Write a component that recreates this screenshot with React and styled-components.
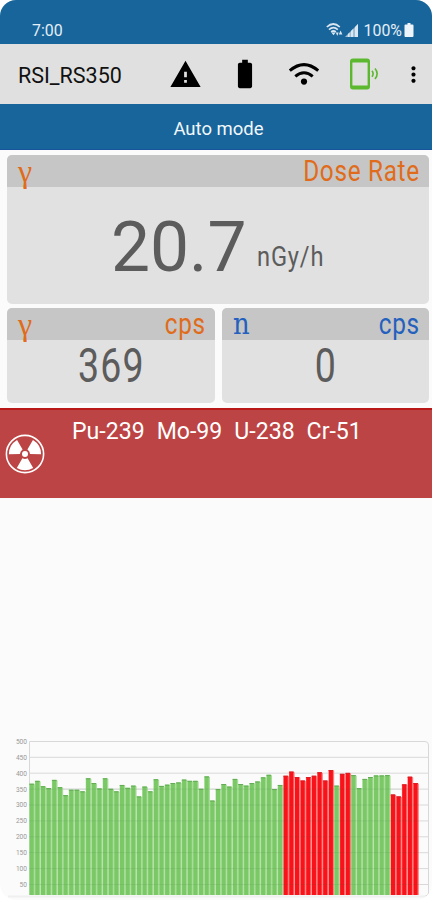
import styled, {createGlobalStyle} from 'styled-components';
import {MdWarning, MdBatteryFull, MdMoreVert} from 'react-icons/md'

const GlobalStyle = createGlobalStyle`
 body {
  margin: 0;
  background: #fff;
  font-family: Roboto, sans-serif;
 }
`;

const Screen = styled.div`
 width: 432px;
 height: 900px;
 overflow: hidden;
 display: flex;
 flex-direction: column;
 background: #fbfbfb;
 border-radius: 16px;
`;

const StatusBar = styled.div`
 box-sizing: border-box;
 height: 44px;
 padding: 16px 18px 0 32px;
 display: flex;
 align-items: center;
 background: #17659b;
 color: #e4eef6;
 font-size: 15.9px;
`;

const Clock = styled.span`
 flex: 1;
`;

const StatusIcons = styled.div`
 display: flex;
 align-items: center;
 gap: 2px;
`;

const Toolbar = styled.div`
 box-sizing: border-box;
 height: 60px;
 padding-left: 18px;
 display: flex;
 align-items: center;
 background: #e0e0e0;
 color: #000;
`;

const DeviceName = styled.span`
 width: 149px;
 padding-top: 3px;
 color: #111;
 font-size: 21.5px;
 white-space: nowrap;
`;

const ToolIcon = styled.div`
 width: ${(props) => props.$width}px;
 display: flex;
 justify-content: center;

 svg {
  flex: none;
 }
`;

const ModeBar = styled.div`
 box-sizing: border-box;
 height: 46px;
 padding: 4px 0 0 5px;
 display: flex;
 align-items: center;
 justify-content: center;
 background: #17659b;
 border-bottom: 1px solid #17549c;
 color: #f2f7fb;
 font-size: 18.5px;
`;

const Panels = styled.div`
 height: 258px;
 box-sizing: border-box;
 padding: 5px 3px 5px 7px;
 display: grid;
 grid-template-columns: 208px 207px;
 grid-template-rows: 149px 95px;
 gap: 4px 7px;
`;

const Panel = styled.div`
 grid-column: ${(props) => (props.$wide ? 'span 2' : 'auto')};
 display: flex;
 flex-direction: column;
 background: #e1e1e1;
 border-radius: 5px;
`;

const PanelHead = styled.div`
 height: 32px;
 box-sizing: border-box;
 padding: 0 10px 1px 11px;
 display: flex;
 align-items: center;
 justify-content: space-between;
 background: #c6c6c6;
 border-radius: 5px 5px 0 0;
 color: ${(props) => props.$color};
`;

const Symbol = styled.span`
 font-family: ${(props) => props.$font}, serif;
 font-size: ${(props) => props.$size}px;
 line-height: 30px;
 transform: scaleX(${(props) => props.$scale || 1});
 transform-origin: left;
`;

const Narrow = styled.span`
 display: inline-block;
 font-size: ${(props) => props.$size}px;
 letter-spacing: ${(props) => props.$spacing || 0}px;
 margin-right: -${(props) => props.$spacing || 0}px;
 transform: scaleX(${(props) => props.$scale});
 transform-origin: ${(props) => props.$origin || 'center'};
 white-space: nowrap;
`;

const Reading = styled.div`
 flex: 1;
 display: flex;
 justify-content: center;
 color: #5c5c5c;
 line-height: 52px;
`;

const DoseReading = styled.div`
 flex: 1;
 padding: 20px 0 0 104px;
 display: flex;
 align-items: flex-start;
 color: #5c5c5c;
`;

const DoseValue = styled.span`
 width: 146px;
 font-size: 69.5px;
 line-height: 82px;
`;

const DoseUnit = styled.div`
 padding-top: 33px;
 line-height: 34px;
`;

const Alarm = styled.div`
 height: 90px;
 box-sizing: border-box;
 padding: 0 5px;
 display: flex;
 background: #bd4444;
 border-top: 2px solid #b91818;
 color: #fff;
`;

const AlarmIcon = styled.div`
 width: 67px;
 padding-top: 24px;
`;

const Isotopes = styled.div`
 padding-top: 8px;
 display: flex;
 gap: 12px;
 font-size: 23.1px;
`;

const ChartArea = styled.div`
 margin-top: auto;
 height: 165px;

 svg {
  display: block;
 }
`;

const orange = '#e06c1b';
const blue = '#2460bd';

// counts per second, one bar for each sample
const samples = [
  367, 376, 359, 353, 379, 356, 331, 348, 348, 343, 384, 369, 352, 384, 351,
  343, 363, 354, 361, 327, 358, 343, 381, 360, 364, 369, 371, 380, 376, 376,
  351, 390, 314, 350, 366, 358, 382, 366, 361, 369, 374, 387, 395, 350, 363,
  392, 405, 388, 377, 388, 392, 403, 377, 410, 361, 398, 401, 394, 353, 382,
  388, 393, 393, 394, 333, 327, 365, 389, 369,
];

const isAlarm = (i) => (i >= 45 && i <= 53) || i === 55 || i === 56 || i >= 64;

const levels = [500, 450, 400, 350, 300, 250, 200, 150, 100, 50];

const toY = (value) => 6.4 + (500 - value) * 0.318;

function Wifi() {
  return (
    <svg width="32" height="24" viewBox="0 0 32 24" fill="none" stroke="#000" strokeWidth="3">
      <path d="M1.8 8.6Q16 -3.4 30.2 8.6" />
      <path d="M7.3 14.4Q16 7.2 24.7 14.4" />
      <circle cx="16" cy="19.6" r="3.1" fill="#000" stroke="none" />
    </svg>
  );
}

function PhoneLink() {
  return (
    <svg width="30" height="32" viewBox="0 0 30 32" fill="none" stroke="#5bb82f">
      <path fillRule="evenodd" fill="#5bb82f" stroke="none" d="M3 0.5H17Q20 0.5 20 3.5V28.5Q20 31.5 17 31.5H3Q0 31.5 0 28.5V3.5Q0 0.5 3 0.5ZM2.4 4.5V27.5H17.6V4.5Z" />
      <path strokeWidth="1.6" d="M22 12.8Q24.2 15.8 22 18.8M25 10.6Q29.3 15.8 25 21" />
    </svg>
  );
}

function StatusWifi() {
  return (
    <svg width="17" height="14" viewBox="0 0 17 14" fill="none" stroke="#d9e6f0" strokeWidth="1.7">
      <path d="M0.8 4Q7.3 -2 13.8 4M3 6.6Q7.5 2.6 11.8 6.6M5.2 9Q7.5 7 9.8 9" />
      <path fill="#d9e6f0" stroke="none" d="M5.3 9.5L7.5 12.2L9.6 9.5ZM9.8 9.5L11.3 13L12.6 9.5ZM12.8 11.4L14.6 7.6L16.4 11.4Z" />
    </svg>
  );
}

function Signal() {
  return (
    <svg width="13" height="13" viewBox="0 0 13 13">
      <path fill="#9dbfd8" d="M0 13L13 0V13Z" />
      <path fill="#dbe8f1" d="M3 13V10L4.5 8.5V13ZM6 13V7L8 5V13ZM10 13V3L13 0V13Z" />
    </svg>
  );
}

function Radiation() {
  return (
    <svg width="40" height="40" viewBox="-20 -20 40 40">
      <circle r="18.6" fill="none" stroke="#fff" strokeWidth="1.6" />
      {[0, 120, 240].map((angle) => (
        <path key={angle} transform={`rotate(${angle})`} fill="#fff" d="M-2.6 4.3L-8.2 13.9Q0 18.5 8.2 13.9L2.6 4.3Q0 5.7 -2.6 4.3Z" />
      ))}
      <circle r="3" fill="#fff" />
    </svg>
  );
}

function Chart() {
  return (
    <svg width="432" height="165" viewBox="0 0 432 165">
      <path fill="none" stroke="#d8d8d8" d="M29.5 160V6.5H425Q428.5 6.5 428.5 10V158Q428.5 161 425 161" />
      <path stroke="#f0f0f0" strokeWidth="2" d="M8 161.5H426" />
      {levels.slice(1).map((v) => (
        <line key={v} x1="29" x2="428" y1={toY(v)} y2={toY(v)} stroke="#d9d9d9" />
      ))}
      {samples.map((v, i) => {
        const x = 29.3 + i * 5.645;
        const y = toY(v);
        const red = isAlarm(i);
        return (
          <g key={i}>
            <rect x={x} y={y + 0.6} width="5.65" height={159.4 - y} fill={red ? '#ff7b7b' : '#a9dc99'} />
            <rect x={x + 0.4} y={y} width="4" height={160 - y} fill={red ? '#f81219' : '#7ac966'} />
            <rect x={x} y={y} width="4.8" height="1" fill={red ? '#d92025' : '#63ac55'} />
          </g>
        );
      })}
      {levels.slice(3).map((v) => (
        <line key={v} x1="29" x2="419" y1={toY(v)} y2={toY(v)} stroke="#3f7040" strokeOpacity="0.1" />
      ))}
      {levels.map((v) => (
        <text key={v} x="27" y={toY(v) + 2.4} textAnchor="end" fontSize="6.6" fill="#999">{v}</text>
      ))}
    </svg>
  );
}

export default function App() {
  return (
    <>
      <GlobalStyle />
      <Screen>
        <StatusBar>
          <Clock>7:00</Clock>
          <StatusIcons>
            <StatusWifi />
            <Signal />
            <span>&nbsp;100%</span>
            <svg width="10" height="14" viewBox="0 0 9 14" fill="#eef5fa">
              <path d="M3 0H6V1.5H8Q9 1.5 9 2.5V13Q9 14 8 14H1Q0 14 0 13V2.5Q0 1.5 1 1.5H3Z" />
            </svg>
          </StatusIcons>
        </StatusBar>
        <Toolbar>
          <DeviceName>RSI_RS350</DeviceName>
          <ToolIcon $width={36}><MdWarning size={33} /></ToolIcon>
          <ToolIcon $width={84}><MdBatteryFull size={34} /></ToolIcon>
          <ToolIcon $width={34}><Wifi /></ToolIcon>
          <ToolIcon $width={87}><PhoneLink /></ToolIcon>
          <ToolIcon $width={10}><MdMoreVert size={25} /></ToolIcon>
        </Toolbar>
        <ModeBar>Auto mode</ModeBar>
        <Panels>
          <Panel $wide>
            <PanelHead $color={orange}>
              <Symbol $font="'Liberation Serif'" $size={32}>γ</Symbol>
              <Narrow $size={29} $scale={0.84} $spacing={0.8} $origin="right">Dose Rate</Narrow>
            </PanelHead>
            <DoseReading>
              <DoseValue>20.7</DoseValue>
              <DoseUnit>
                <Narrow $size={28.5} $scale={0.83} $spacing={1} $origin="left">nGy/h</Narrow>
              </DoseUnit>
            </DoseReading>
          </Panel>
          <Panel>
            <PanelHead $color={orange}>
              <Symbol $font="'Liberation Serif'" $size={32}>γ</Symbol>
              <Narrow $size={29} $scale={0.84} $spacing={0.8} $origin="right">cps</Narrow>
            </PanelHead>
            <Reading>
              <Narrow $size={47.5} $scale={0.79} $spacing={1.6}>369</Narrow>
            </Reading>
          </Panel>
          <Panel>
            <PanelHead $color={blue}>
              <Symbol $font="'DejaVu Serif'" $size={29.5} $scale={0.88}>n</Symbol>
              <Narrow $size={29} $scale={0.84} $spacing={0.8} $origin="right">cps</Narrow>
            </PanelHead>
            <Reading>
              <Narrow $size={47.5} $scale={0.79}>0</Narrow>
            </Reading>
          </Panel>
        </Panels>
        <Alarm>
          <AlarmIcon><Radiation /></AlarmIcon>
          <Isotopes>
            <span>Pu-239</span>
            <span>Mo-99</span>
            <span>U-238</span>
            <span>Cr-51</span>
          </Isotopes>
        </Alarm>
        <ChartArea>
          <Chart />
        </ChartArea>
      </Screen>
    </>
  );
}
